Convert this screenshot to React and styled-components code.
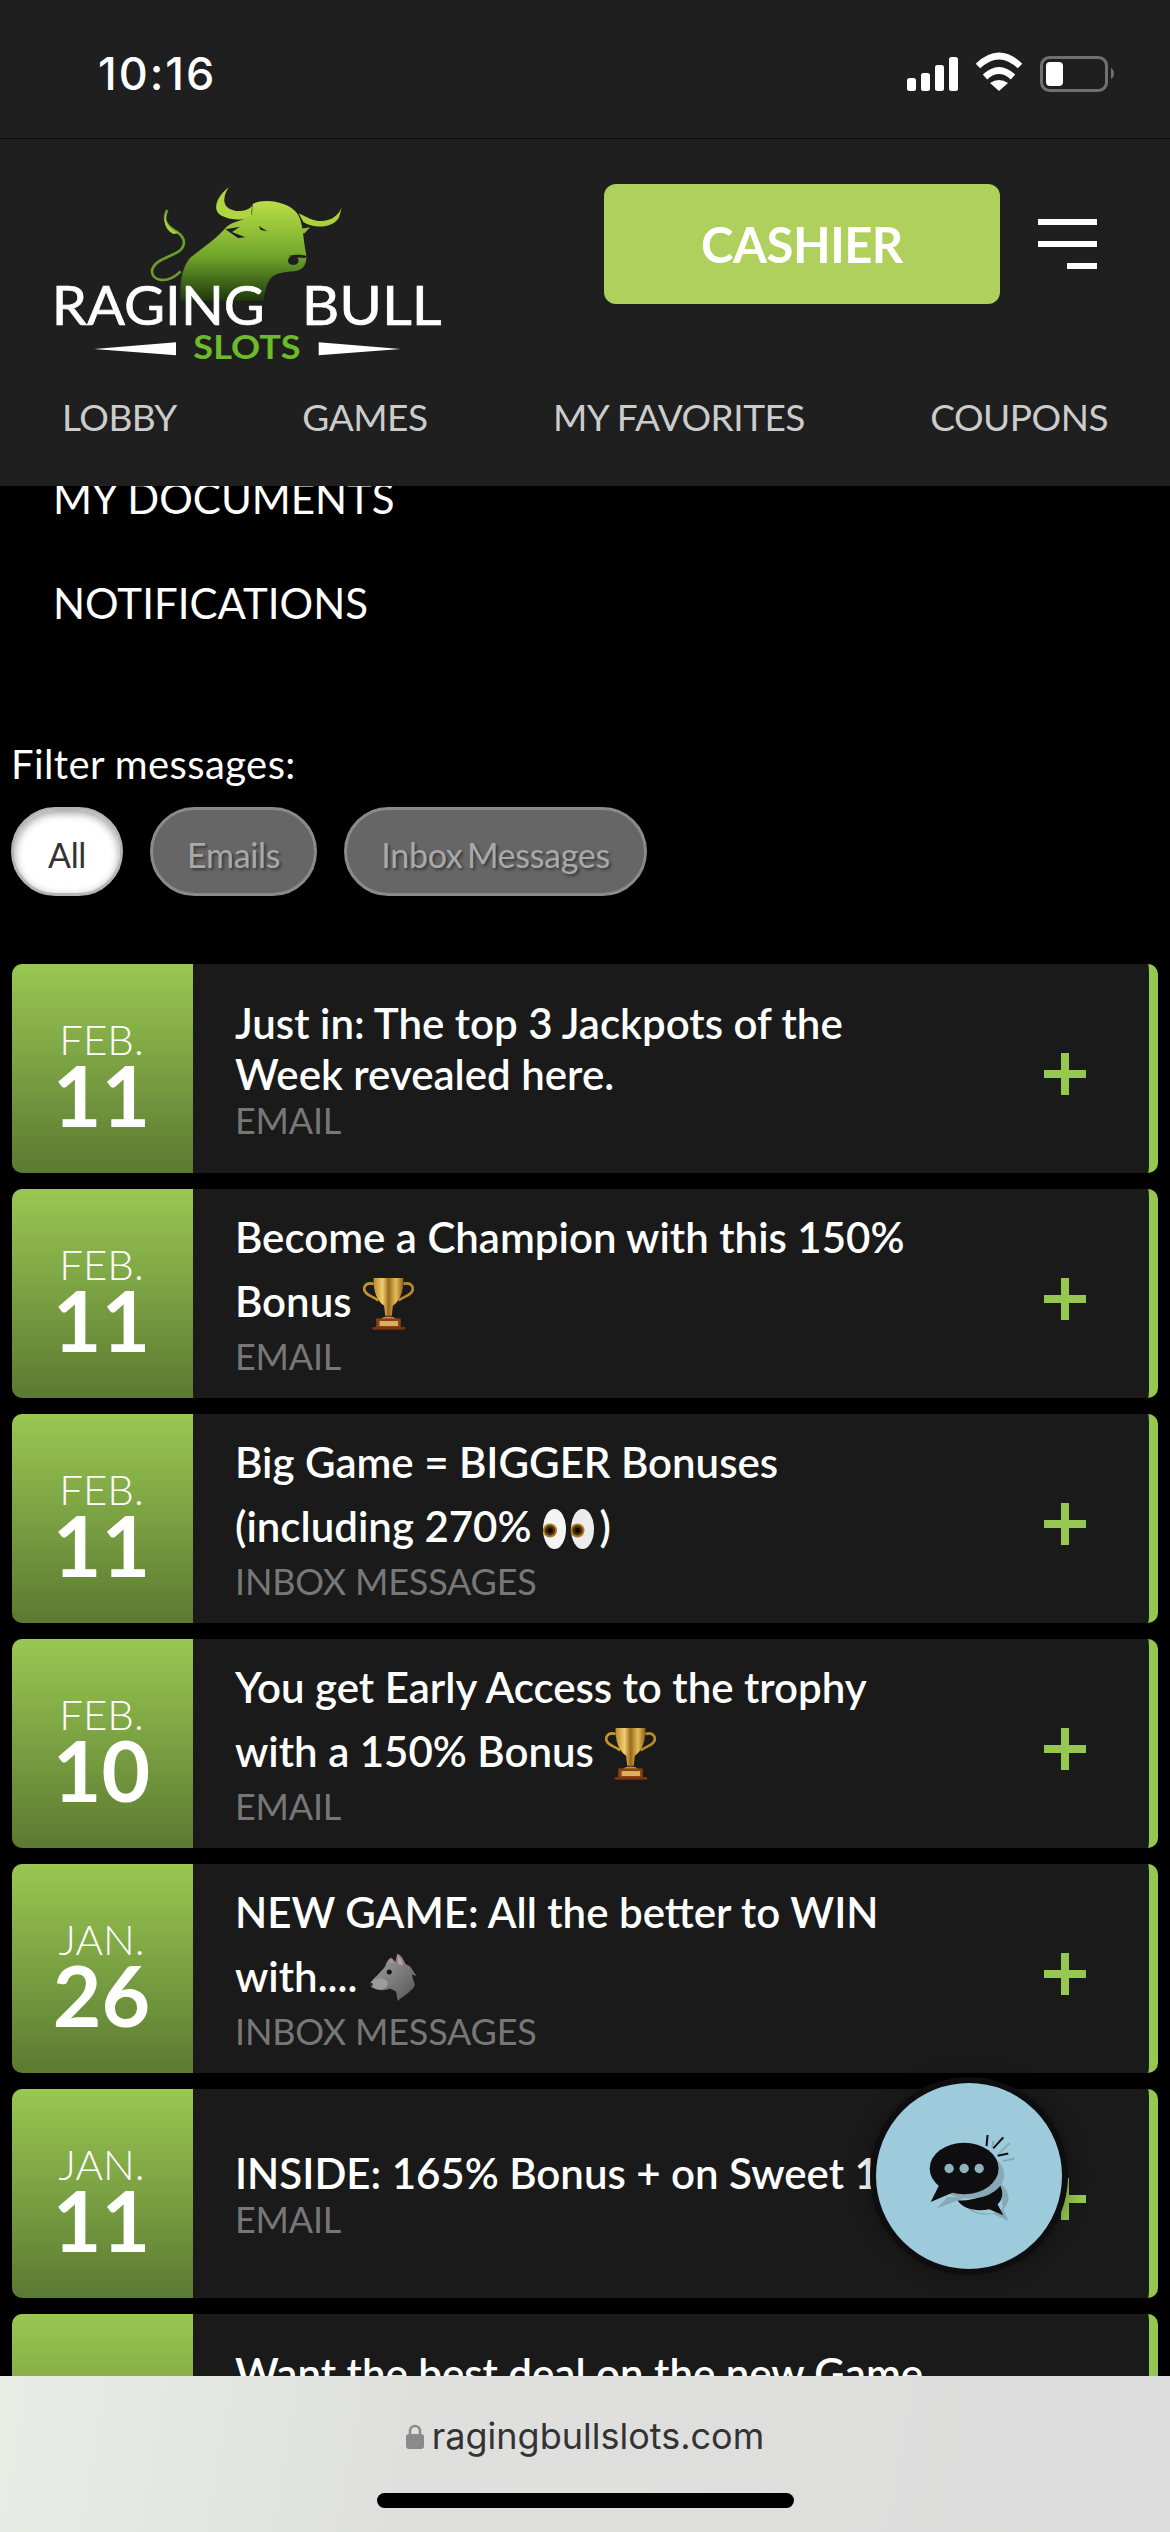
import React from "react";
import styled, { createGlobalStyle } from "styled-components";

const GlobalStyle = createGlobalStyle`
  html, body {
    margin: 0;
    padding: 0;
    background: #000;
    font-family: Lato, "Liberation Sans", sans-serif;
  }
`;

const Page = styled.div`
  position: relative;
  width: 1170px;
  height: 2532px;
  display: flex;
  flex-direction: column;
  overflow: hidden;
  background: #000;
`;

const StatusBar = styled.div`
  height: 139px;
  box-sizing: border-box;
  flex-shrink: 0;
  display: flex;
  justify-content: space-between;
  align-items: flex-start;
  padding: 50px 53px 0 98px;
  background: #1f1f1f;
  border-bottom: 1px solid #0c0c0c;
`;

const Clock = styled.div`
  font-family: Inter, Roboto, sans-serif;
  font-size: 45px;
  font-weight: 500;
  line-height: 48px;
  letter-spacing: 2px;
  color: #fff;
`;

const StatusIcons = styled.svg`
  display: block;
  width: 212px;
  height: 45px;
`;

const Header = styled.header`
  height: 347px;
  flex-shrink: 0;
  background: #1f1f1f;
  position: relative;
  z-index: 1;
  display: flex;
  flex-direction: column;
`;

const TopRow = styled.div`
  display: flex;
  align-items: flex-start;
  padding-top: 32px;
  height: 235px;
  box-sizing: border-box;
`;

const LogoMark = styled.svg`
  display: block;
  width: 430px;
  height: 200px;
  margin-left: 30px;
  margin-top: -1px;
  flex-shrink: 0;
`;

const CashierButton = styled.button`
  width: 396px;
  height: 120px;
  margin: 13px 0 0 144px;
  border: none;
  border-radius: 12px;
  background: #afd05c;
  color: #fff;
  font-family: Lato, sans-serif;
  font-size: 49px;
  font-weight: 700;
  letter-spacing: -0.5px;
`;

const Burger = styled.div`
  width: 59px;
  margin: 48px 0 0 38px;
  display: flex;
  flex-direction: column;
  align-items: flex-end;
  gap: 16px;
`;

const BurgerBar = styled.span`
  display: block;
  height: 6px;
  width: ${(p) => (p.$short ? "30px" : "59px")};
  background: #fff;
`;

const Nav = styled.nav`
  display: flex;
  justify-content: space-between;
  padding: 0 62px;
  margin-top: 21px;
`;

const NavLink = styled.a`
  font-size: 37px;
  line-height: 44px;
  color: #ccc;
  letter-spacing: -0.5px;
`;

const Content = styled.main`
  flex: 1;
  min-height: 0;
  overflow: hidden;
  display: flex;
  flex-direction: column;
`;

const AccountList = styled.div`
  display: flex;
  flex-direction: column;
  gap: 65px;
  margin-top: -8px;
  padding-left: 53px;
`;

const AccountLink = styled.a`
  font-size: 42px;
  line-height: 40px;
  color: #fff;
`;

const FilterBlock = styled.div`
  padding: 0 11px;
  margin-top: 117px;
`;

const FilterLabel = styled.div`
  font-size: 40px;
  line-height: 48px;
  letter-spacing: 0.4px;
  color: #fff;
`;

const Pills = styled.div`
  display: flex;
  gap: 27px;
  margin-top: 19px;
`;

const Pill = styled.button`
  height: 89px;
  box-sizing: border-box;
  padding: 5px 34px 0;
  border-radius: 45px;
  font-family: Lato, sans-serif;
  font-size: 34px;
  letter-spacing: -0.3px;
  word-spacing: -4px;
  border: 3px solid ${(p) => (p.$active ? "#b5b5b5" : "#8a8a8a")};
  background: ${(p) => (p.$active ? "#fff" : "#666")};
  color: ${(p) => (p.$active ? "#333" : "#a9a9a9")};
  box-shadow: ${(p) => (p.$active ? "inset 0 3px 8px rgba(0,0,0,0.4)" : "none")};
  text-shadow: ${(p) => (p.$active ? "none" : "2px 2px 3px rgba(0,0,0,0.45)")};
`;

const MessageList = styled.div`
  display: flex;
  flex-direction: column;
  gap: 16px;
  padding: 0 12px;
  margin-top: 68px;
`;

const Card = styled.article`
  height: 209px;
  flex-shrink: 0;
  display: flex;
  overflow: hidden;
  border-radius: 10px;
  background: #1a1a1a;
  border-right: 9px solid #96c750;
`;

const DateCell = styled.div`
  width: 181px;
  flex-shrink: 0;
  display: flex;
  flex-direction: column;
  align-items: center;
  justify-content: center;
  padding-right: 2px;
  box-sizing: border-box;
  background: linear-gradient(#99c752, #5b7a32);
  color: #fff;
`;

const Month = styled.div`
  font-size: 42px;
  line-height: 40px;
  font-weight: 300;
  margin-top: 12px;
`;

const Day = styled.div`
  font-size: 84px;
  line-height: 72px;
  font-weight: 700;
`;

const CardBody = styled.div`
  flex: 1;
  min-width: 0;
  padding-left: 42px;
  display: flex;
  flex-direction: column;
  justify-content: center;
`;

const CardTitle = styled.h3`
  margin: 0;
  width: 720px;
  font-size: 42px;
  font-weight: 600;
  line-height: 51px;
  color: #fff;
  white-space: pre-line;
`;

// the margin box sits on the line, so these margins also set how tall the line gets
const EmojiIcon = styled.svg`
  display: inline-block;
  vertical-align: -19px;
  margin: ${(p) => p.$above} ${(p) => p.$after} ${(p) => p.$below} 11px;
`;

const CardType = styled.div`
  font-size: 36px;
  line-height: 40px;
  color: #777;
  letter-spacing: -0.2px;
`;

const PlusButton = styled.div`
  position: relative;
  width: 42px;
  height: 42px;
  flex-shrink: 0;
  margin: 89px 63px 0 0;
  &::before,
  &::after {
    content: "";
    position: absolute;
    background: #96c750;
  }
  &::before {
    left: 0;
    right: 0;
    top: 17px;
    height: 8px;
  }
  &::after {
    top: 0;
    bottom: 0;
    left: 17px;
    width: 8px;
  }
`;

const BrowserBar = styled.footer`
  height: 156px;
  flex-shrink: 0;
  position: relative;
  z-index: 1;
  display: flex;
  flex-direction: column;
  align-items: center;
  background: linear-gradient(100deg, #e9ece5 0%, #dfe0de 35%, #dcdcdc 100%);
`;

const UrlRow = styled.div`
  display: flex;
  align-items: center;
  gap: 8px;
  margin-top: 37px;
`;

const LockIcon = styled.svg`
  display: block;
  width: 18px;
  height: 25px;
`;

const UrlText = styled.span`
  font-family: Inter, Roboto, sans-serif;
  font-size: 36px;
  line-height: 46px;
  color: #333;
`;

const HomeIndicator = styled.div`
  width: 417px;
  height: 15px;
  margin-top: 34px;
  border-radius: 8px;
  background: #000;
`;

const ChatBubble = styled.div`
  position: absolute;
  left: 870px;
  top: 2077px;
  width: 198px;
  height: 198px;
  box-sizing: border-box;
  border: 6px solid #0e0e10;
  border-radius: 50%;
  background: #9ecbdb;
  box-shadow: 0 0 20px rgba(0, 0, 0, 0.35);
  z-index: 2;
  display: flex;
  align-items: center;
  justify-content: center;
`;

const ChatIcon = styled.svg`
  display: block;
  width: 97px;
  height: 97px;
  margin: 5px 0 0 6px;
`;

const Trophy = () => (
  <EmojiIcon width="51" height="53" viewBox="68 42 154 158" $above="14px" $below="6px" $after="0">
    <defs>
      <linearGradient id="cup" x1="0" x2="1">
        <stop offset="0" stopColor="#b98a28" />
        <stop offset="0.3" stopColor="#f0cd70" />
        <stop offset="0.5" stopColor="#9a6a1a" />
        <stop offset="0.75" stopColor="#e5bc5c" />
        <stop offset="1" stopColor="#8a5a14" />
      </linearGradient>
    </defs>
    <path d="M100 62 C75 54 64 76 78 90 C88 100 100 100 114 112" fill="none" stroke="#c4952f" strokeWidth="8" />
    <path d="M190 62 C215 54 226 76 212 90 C202 100 190 100 176 112" fill="none" stroke="#b98a28" strokeWidth="8" />
    <path d="M100 44 H190 C192 80 180 115 158 128 L155 158 H135 L132 128 C110 115 98 80 100 44 Z" fill="url(#cup)" />
    <path d="M122 168 C130 158 160 158 168 168 Z" fill="#c4952f" />
    <rect x="108" y="166" width="74" height="28" fill="#8a3f16" />
    <rect x="118" y="174" width="56" height="15" fill="#d9b15a" />
    <rect x="97" y="192" width="98" height="8" fill="#7a3510" />
  </EmojiIcon>
);

const Eyes = () => (
  <EmojiIcon width="51" height="40" viewBox="0 0 51 40" $above="21px" $below="12px" $after="6px">
    <ellipse cx="11.5" cy="20" rx="11.5" ry="20" fill="#f4f4f4" />
    <ellipse cx="39.5" cy="20" rx="11.5" ry="20" fill="#ececec" />
    <circle cx="7" cy="21.5" r="7" fill="#a8791c" />
    <circle cx="34.5" cy="21.5" r="7" fill="#a8791c" />
    <circle cx="7" cy="21.5" r="5" fill="#4a2a0c" />
    <circle cx="34.5" cy="21.5" r="5" fill="#4a2a0c" />
    <circle cx="7" cy="21.5" r="2.5" fill="#0e0805" />
    <circle cx="34.5" cy="21.5" r="2.5" fill="#0e0805" />
  </EmojiIcon>
);

const Wolf = () => (
  <EmojiIcon width="50" height="51" viewBox="50 25 160 160" $above="14px" $below="8px" $after="0">
    <defs>
      <linearGradient id="fur" x1="0" y1="0" x2="1" y2="1">
        <stop offset="0" stopColor="#a5a5a5" />
        <stop offset="1" stopColor="#555" />
      </linearGradient>
    </defs>
    <path d="M55 125 C70 105 85 95 105 70 C110 55 115 45 125 42 L138 55 L143 30 C155 30 165 50 170 62 L185 70 L205 100 L190 95 L200 130 C195 145 170 160 145 180 L140 150 L120 140 C100 150 75 145 60 135 Z" fill="url(#fur)" />
    <ellipse cx="87" cy="125" rx="26" ry="18" fill="#9c9c9c" />
    <path d="M146 36 C155 42 160 55 162 66 L147 62 Z" fill="#c79b9f" />
    <path d="M120 46 L133 56 L118 60 Z" fill="#b79295" />
    <circle cx="118" cy="87" r="8" fill="#111" />
    <circle cx="60" cy="127" r="5" fill="#222" />
  </EmojiIcon>
);

const messages = [
  { month: "FEB.", day: "11", title: "Just in: The top 3 Jackpots of the\nWeek revealed here.", type: "EMAIL" },
  { month: "FEB.", day: "11", title: "Become a Champion with this 150%\nBonus", icon: <Trophy />, type: "EMAIL" },
  { month: "FEB.", day: "11", title: "Big Game = BIGGER Bonuses\n(including 270%", icon: <><Eyes />)</>, type: "INBOX MESSAGES" },
  { month: "FEB.", day: "10", title: "You get Early Access to the trophy\nwith a 150% Bonus", icon: <Trophy />, type: "EMAIL" },
  { month: "JAN.", day: "26", title: "NEW GAME: All the better to WIN\nwith....", icon: <Wolf />, type: "INBOX MESSAGES" },
  { month: "JAN.", day: "11", title: "INSIDE: 165% Bonus + on Sweet 16", type: "EMAIL" },
  { month: "JAN.", day: "08", title: "Want the best deal on the new Game\nright here", type: "EMAIL" },
];

export default function App() {
  return (
    <Page>
      <GlobalStyle />
      <StatusBar>
        <Clock>10:16</Clock>
        <StatusIcons viewBox="905 50 212 45">
          <rect x="907" y="78" width="9" height="13" rx="2.5" fill="#fff" />
          <rect x="921" y="73" width="9" height="18" rx="2.5" fill="#fff" />
          <rect x="935" y="65" width="9" height="26" rx="2.5" fill="#fff" />
          <rect x="949" y="57" width="9" height="34" rx="2.5" fill="#fff" />
          <path d="M978 66 Q999 46 1020 66" fill="none" stroke="#fff" strokeWidth="6.5" />
          <path d="M985 77 Q999 64 1013 77" fill="none" stroke="#fff" strokeWidth="6.5" />
          <path d="M999 91 L990 83 Q999 77 1008 83 Z" fill="#fff" />
          <rect x="1041.5" y="57.5" width="65" height="33" rx="8" fill="none" stroke="#707070" strokeWidth="3" />
          <rect x="1046" y="62" width="17" height="24" rx="4" fill="#fff" />
          <path d="M1111 68 C1115 70 1115 77 1111 79 Z" fill="#707070" />
        </StatusIcons>
      </StatusBar>

      <Header>
        <TopRow>
          <LogoMark viewBox="0 0 1290 600">
            <defs>
              <linearGradient id="bull" x1="0" y1="90" x2="0" y2="390" gradientUnits="userSpaceOnUse">
                <stop offset="0" stopColor="#bbdf47" />
                <stop offset="0.55" stopColor="#72a82c" />
                <stop offset="1" stopColor="#1f3a0c" />
              </linearGradient>
            </defs>
            <path d="M412 120 C396 150 410 170 440 185 C470 205 468 232 440 248 C410 264 372 272 366 302 C364 332 410 345 452 304" fill="none" stroke="#6a9e2a" strokeWidth="8" />
            <path d="M412 120 C398 155 415 170 445 190 L430 192 C405 180 395 150 412 120 Z" fill="#a5cf3e" />
            <path d="M668 102 C700 84 770 92 800 128 C818 150 818 190 826 240 C832 262 830 288 812 298 C790 310 760 300 730 318 C712 330 706 360 700 392 L452 392 C448 340 456 290 482 262 C520 232 560 205 590 170 C610 152 650 152 666 132 Z" fill="url(#bull)" />
            <path d="M596 52 C560 80 546 118 572 136 C600 152 650 154 664 136 L666 108 C650 128 610 128 590 110 C578 96 582 74 596 52 Z" fill="#b0d63f" />
            <path d="M935 112 C920 150 880 162 840 146 L806 130 L820 156 C850 176 910 176 928 140 Z" fill="#aad23c" />
            <path d="M812 176 L840 172 L824 190 L814 190 Z" fill="#8dbb35" />
            <path d="M586 178 L630 170 L606 186 L646 202 L624 204 Z" fill="#1f1f1f" />
            <path d="M686 168 L712 184 L692 180 Z" fill="#1f1f1f" />
            <ellipse cx="790" cy="272" rx="16" ry="13" fill="#1f1f1f" />
            <path d="M775 258 C800 252 815 254 830 258 L826 264 L790 262 Z" fill="#1f1f1f" />
            <text x="65" y="465" fontFamily="Lato, sans-serif" fontSize="165" fontWeight="400" fill="#fff" stroke="#fff" strokeWidth="2" textLength="640" lengthAdjust="spacingAndGlyphs">RAGING</text>
            <text x="815" y="465" fontFamily="Lato, sans-serif" fontSize="165" fontWeight="400" fill="#fff" stroke="#fff" strokeWidth="2" textLength="420" lengthAdjust="spacingAndGlyphs">BULL</text>
            <text x="490" y="568" fontFamily="Lato, sans-serif" fontSize="98" fontWeight="700" fill="#6cbb2b" textLength="322" lengthAdjust="spacingAndGlyphs">SLOTS</text>
            <path d="M192 537 L438 517 L438 556 Z" fill="#fff" />
            <path d="M1112 537 L866 517 L866 556 Z" fill="#fff" />
          </LogoMark>
          <CashierButton>CASHIER</CashierButton>
          <Burger>
            <BurgerBar />
            <BurgerBar />
            <BurgerBar $short />
          </Burger>
        </TopRow>
        <Nav>
          <NavLink>LOBBY</NavLink>
          <NavLink>GAMES</NavLink>
          <NavLink>MY FAVORITES</NavLink>
          <NavLink>COUPONS</NavLink>
        </Nav>
      </Header>

      <Content>
        <AccountList>
          <AccountLink>MY DOCUMENTS</AccountLink>
          <AccountLink>NOTIFICATIONS</AccountLink>
        </AccountList>
        <FilterBlock>
          <FilterLabel>Filter messages:</FilterLabel>
          <Pills>
            <Pill $active>All</Pill>
            <Pill>Emails</Pill>
            <Pill>Inbox Messages</Pill>
          </Pills>
        </FilterBlock>
        <MessageList>
          {messages.map((m, i) => (
            <Card key={i}>
              <DateCell>
                <Month>{m.month}</Month>
                <Day>{m.day}</Day>
              </DateCell>
              <CardBody>
                <CardTitle>
                  {m.title}
                  {m.icon}
                </CardTitle>
                <CardType>{m.type}</CardType>
              </CardBody>
              <PlusButton />
            </Card>
          ))}
        </MessageList>
      </Content>

      <BrowserBar>
        <UrlRow>
          <LockIcon viewBox="0 0 18 25">
            <path d="M4 11 V7 A5 5 0 0 1 14 7 V11" fill="none" stroke="#8a8a8a" strokeWidth="2.5" />
            <rect x="0" y="10" width="18" height="15" rx="3" fill="#8a8a8a" />
          </LockIcon>
          <UrlText>ragingbullslots.com</UrlText>
        </UrlRow>
        <HomeIndicator />
      </BrowserBar>

      <ChatBubble>
        <ChatIcon viewBox="220 210 290 290">
          <path d="M335 425 C360 465 440 470 455 440 L472 482 L425 460 C390 470 350 455 335 425 Z" fill="#86a9b5" />
          <path d="M450 370 C482 400 476 430 455 447 Z" fill="#86a9b5" />
          <path d="M320 420 C360 425 420 405 445 370 C460 395 455 420 440 432 L457 465 L415 447 C375 455 335 445 320 420 Z" fill="#0e0e10" />
          <ellipse cx="357" cy="343" rx="103" ry="72" fill="#86a9b5" />
          <path d="M290 410 L258 445 L345 412 Z" fill="#86a9b5" />
          <ellipse cx="340" cy="325" rx="103" ry="77" fill="#0e0e10" />
          <path d="M265 375 L240 425 L310 395 Z" fill="#0e0e10" />
          <circle cx="295" cy="325" r="14" fill="#8fb2bf" />
          <circle cx="340" cy="325" r="14" fill="#8fb2bf" />
          <circle cx="385" cy="325" r="14" fill="#8fb2bf" />
          <path d="M428 243 L424 262 M475 250 L445 280 M490 295 L456 303" stroke="#86a9b5" strokeWidth="6" fill="none" />
          <path d="M410 225 L407 258 M457 232 L427 265 M472 280 L440 287" stroke="#0e0e10" strokeWidth="6" fill="none" />
        </ChatIcon>
      </ChatBubble>
    </Page>
  );
}
